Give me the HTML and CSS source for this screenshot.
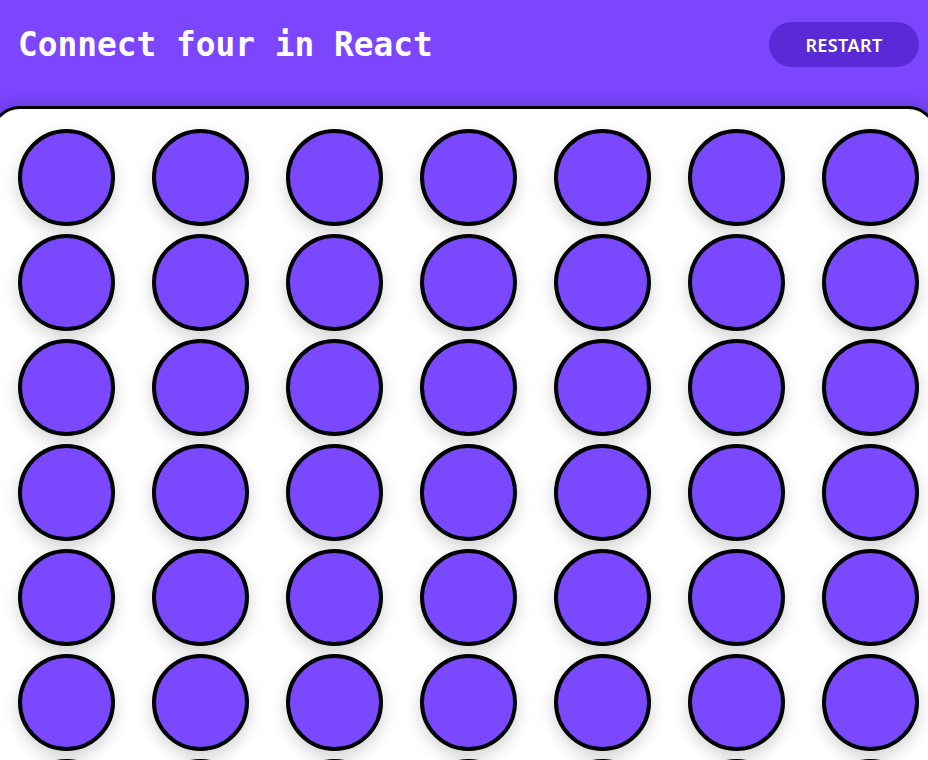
FILE: index.html
```html
<!DOCTYPE html>
<html>
<head>
<meta charset="utf-8">
<link rel="stylesheet" href="styles.css">
</head>
<body>
<header class="topbar">
  <h1 class="title">Connect four in React</h1>
  <button class="restart">RESTART</button>
</header>
<main class="board">
  <div class="grid">
    <div class="cell"></div><div class="cell"></div><div class="cell"></div><div class="cell"></div><div class="cell"></div><div class="cell"></div><div class="cell"></div>
    <div class="cell"></div><div class="cell"></div><div class="cell"></div><div class="cell"></div><div class="cell"></div><div class="cell"></div><div class="cell"></div>
    <div class="cell"></div><div class="cell"></div><div class="cell"></div><div class="cell"></div><div class="cell"></div><div class="cell"></div><div class="cell"></div>
    <div class="cell"></div><div class="cell"></div><div class="cell"></div><div class="cell"></div><div class="cell"></div><div class="cell"></div><div class="cell"></div>
    <div class="cell"></div><div class="cell"></div><div class="cell"></div><div class="cell"></div><div class="cell"></div><div class="cell"></div><div class="cell"></div>
    <div class="cell"></div><div class="cell"></div><div class="cell"></div><div class="cell"></div><div class="cell"></div><div class="cell"></div><div class="cell"></div>
    <div class="cell"></div><div class="cell"></div><div class="cell"></div><div class="cell"></div><div class="cell"></div><div class="cell"></div><div class="cell"></div>
  </div>
</main>
</body>
</html>
```
FILE: styles.css
```css
html, body {
  margin: 0;
  padding: 0;
  overflow: hidden;
  background: #7c46ff;
}
body {
  width: 928px;
  height: 760px;
}
.topbar {
  box-sizing: border-box;
  height: 106px;
  display: flex;
  justify-content: space-between;
  align-items: flex-start;
  padding: 22px 9px 0 18px;
  background: #7c46ff;
}
.title {
  margin: 0;
  font-family: "DejaVu Sans Mono", monospace;
  font-weight: bold;
  font-size: 32.8px;
  line-height: 47px;
  color: #ffffff;
}
.restart {
  width: 150px;
  height: 45px;
  border: none;
  border-radius: 23px;
  background: #5a2ad6;
  color: #ffffff;
  font-family: "Noto Sans", sans-serif;
  font-weight: 600;
  font-size: 18px;
  letter-spacing: 0.4px;
  padding: 0;
}
.board {
  display: block;
  margin: 0 -10px;
  background: #ffffff;
  border: 3px solid #000;
  border-radius: 30px 30px 0 0;
  box-shadow: 0 -4px 16px rgba(0, 0, 0, 0.16);
  padding: 20px 0 0 25px;
  height: 640px;
  overflow: hidden;
}
.grid {
  display: grid;
  grid-template-columns: repeat(7, 97px);
  column-gap: 37px;
  row-gap: 8px;
  padding-bottom: 20px;
}
.cell {
  box-sizing: border-box;
  width: 97px;
  height: 97px;
  border-radius: 50%;
  border: 4px solid #000;
  background: #7a49ff;
  box-shadow: 0 6px 16px rgba(0, 0, 0, 0.18);
}
```
